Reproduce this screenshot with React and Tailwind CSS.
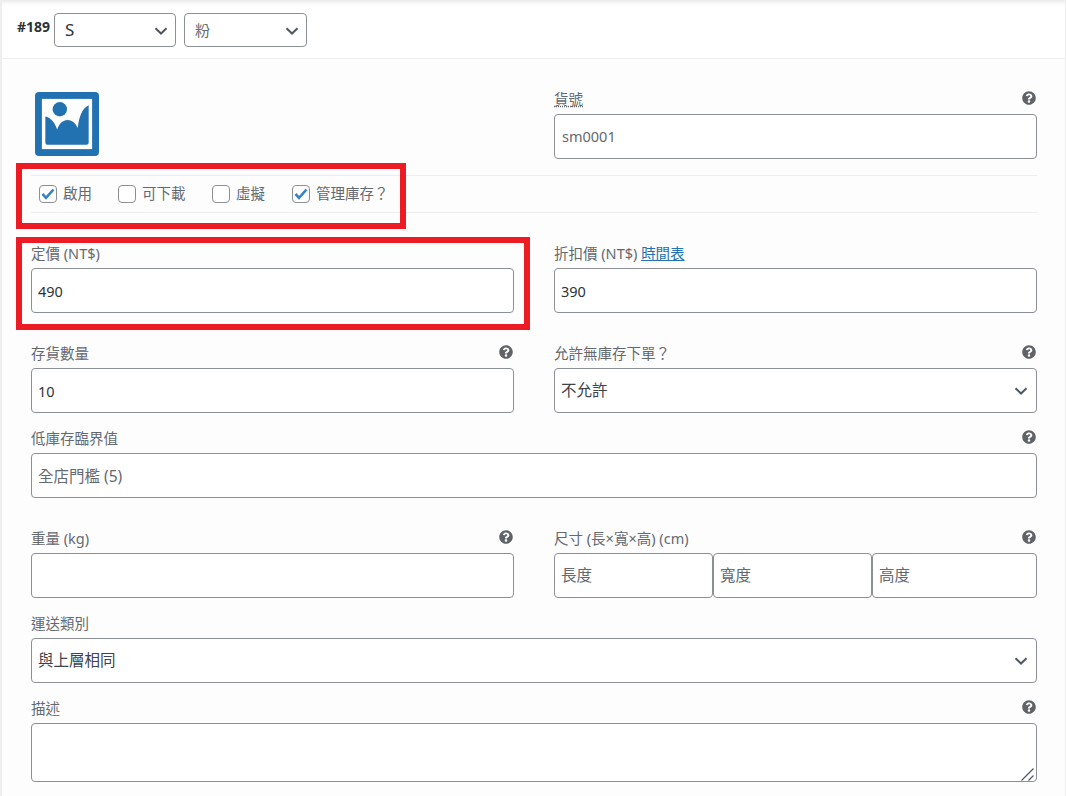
import { FaQuestionCircle } from "react-icons/fa";

const fieldCls = "w-full h-[45px] px-[6px] bg-white border border-[#8c8f94] rounded-[4px] text-[15.5px] text-[#2c3338] placeholder:text-[#646970] outline-none";

function Help() {
  return <FaQuestionCircle className="absolute right-[1px] top-[5px] text-[#5f6368]" size={14} />;
}

function Chevron({ className }) {
  return (
    <svg className={"absolute pointer-events-none " + className} width="14" height="8" viewBox="0 0 14 8" fill="none">
      <path d="M1.5 1.2 7 6.5l5.5-5.3" stroke="#50575e" strokeWidth="2" />
    </svg>
  );
}

function Label({ children, help }) {
  return (
    <div className="relative h-[28px] flex items-center text-[14.5px] text-[#646970]">
      <span>{children}</span>
      {help && <Help />}
    </div>
  );
}

function SelectBox({ value }) {
  return (
    <div className="relative">
      <select defaultValue={value} className={fieldCls + " appearance-none pr-[30px] !text-[#3c434a]"}>
        <option>{value}</option>
      </select>
      <Chevron className="right-[9px] top-[19px]" />
    </div>
  );
}

function SmallSelect({ value, width, text }) {
  return (
    <div className={"relative " + width}>
      <select defaultValue={value} className={"w-full h-[34px] pl-[10px] pr-[30px] appearance-none bg-white border border-[#8c8f94] rounded-[4px] outline-none " + text}>
        <option>{value}</option>
      </select>
      <Chevron className="right-[8px] top-[14px]" />
    </div>
  );
}

function Check({ label, checked, width }) {
  return (
    <label className={"flex items-center gap-[6px] " + width}>
      <span className="w-[18px] h-[18px] bg-white border border-[#8c8f94] rounded-[4px] flex items-center justify-center shrink-0">
        {checked && (
          <svg width="14" height="12" viewBox="0 0 14 12" fill="none">
            <path d="M1.5 6 5 9.800 12.500 1.500" stroke="#3582c4" strokeWidth="2.6" />
          </svg>
        )}
      </span>
      <span className="text-[14.5px] text-[#646970] whitespace-nowrap">{label}</span>
    </label>
  );
}

function PlaceholderImage() {
  return (
    <svg width="64" height="64" viewBox="0 0 65 65">
      <rect width="65" height="65" rx="4" fill="#2271b1" />
      <rect x="7" y="7" width="51" height="51" fill="#fff" />
      <circle cx="25.2" cy="17.5" r="7.3" fill="#2271b1" />
      <path d="M10.500 25c5 1 9 5 12 13 2-6 6-9.500 10.500-9.500 4.500 0 8 3 10.500 8 1-10 4-20 11-23v38a2 2 0 0 1-2 2H12.500a2 2 0 0 1-2-2z" fill="#2271b1" />
    </svg>
  );
}

export default function App() {
  return (
    <div className="relative w-[1066px] h-[796px] overflow-hidden bg-[#fdfdfd] border-l-2 border-r border-[#eeeeee] font-['Noto_Sans','Noto_Sans_CJK_TC',sans-serif]">
      <div className="h-[59px] bg-white border-b border-[#eeeeee] pl-[15px] pt-[13px] flex gap-[8px] shadow-[inset_0_5px_4px_-3px_rgba(0,0,0,0.1)]">
        <div className="flex gap-[4px]">
          <span className="w-[33px] text-[14px] font-bold text-[#2c3338] leading-[28px]">#189</span>
          <SmallSelect value="S" width="w-[122px]" text="text-[17px] text-[#2c3338]" />
        </div>
        <SmallSelect value="粉" width="w-[123px]" text="text-[15px] text-[#646970]" />
      </div>

      <div className="pl-[29px] pr-[28px]">
        <div className="grid grid-cols-2 gap-x-[40px] pt-[27px]">
          <div className="pt-[6px] pl-[4px]">
            <PlaceholderImage />
          </div>
          <div>
            <Label help><span className="underline decoration-dotted">貨號</span></Label>
            <input className={fieldCls + " !text-[14.5px] !px-[7px] pb-[2px]"} placeholder="sm0001" />
          </div>
        </div>

        <div className="mt-[16px] h-[38px] border-y border-[#eeeeee] pl-[8px] flex items-center">
          <Check label="啟用" checked width="w-[79px]" />
          <Check label="可下載" width="w-[94px]" />
          <Check label="虛擬" width="w-[80px]" />
          <Check label="管理庫存？" checked />
        </div>

        <div className="grid grid-cols-2 gap-x-[40px] pt-[27px]">
          <div>
            <Label>定價 (NT$)</Label>
            <input className={fieldCls + " !text-[14.5px]"} defaultValue="490" />
          </div>
          <div>
            <Label>折扣價 (NT$) <a className="text-[#2271b1] underline">時間表</a></Label>
            <input className={fieldCls + " !text-[14.5px]"} defaultValue="390" />
          </div>
        </div>

        <div className="grid grid-cols-2 gap-x-[40px] pt-[27px]">
          <div>
            <Label help>存貨數量</Label>
            <input className={fieldCls + " !text-[14.5px]"} defaultValue="10" />
          </div>
          <div>
            <Label help>允許無庫存下單？</Label>
            <SelectBox value="不允許" />
          </div>
        </div>

        <div className="pt-[12px]">
          <Label help>低庫存臨界值</Label>
          <input className={fieldCls} placeholder="全店門檻 (5)" />
        </div>

        <div className="grid grid-cols-2 gap-x-[40px] pt-[27px]">
          <div>
            <Label help>重量 (kg)</Label>
            <input className={fieldCls} />
          </div>
          <div>
            <Label help>尺寸 (長×寬×高) (cm)</Label>
            <div className="flex">
              <input className={fieldCls + " !w-[159px] pb-[2px]"} placeholder="長度" />
              <input className={fieldCls + " !w-[159px] pb-[2px]"} placeholder="寬度" />
              <input className={fieldCls + " !w-[165px] pb-[2px]"} placeholder="高度" />
            </div>
          </div>
        </div>

        <div className="pt-[12px]">
          <Label>運送類別</Label>
          <SelectBox value="與上層相同" />
        </div>

        <div className="pt-[12px]">
          <Label help>描述</Label>
          <div className="relative">
            <textarea className="block w-full h-[59px] px-[7px] bg-white border border-[#8c8f94] rounded-[4px] outline-none resize-none" />
            <svg className="absolute right-[3px] bottom-[1px]" width="13" height="13" viewBox="0 0 13 13" fill="none">
              <path d="M0.500 12.500 12.500 0.500M7.500 12.500l5-5" stroke="#50575e" strokeWidth="1.2" />
            </svg>
          </div>
        </div>
      </div>

      {/* red annotation boxes on top of the form */}
      <div className="absolute left-[14px] top-[163px] w-[390px] h-[66px] border-[6px] border-[#ed1c24]" />
      <div className="absolute left-[14px] top-[237px] w-[514px] h-[93px] border-[6px] border-[#ed1c24]" />
    </div>
  );
}
